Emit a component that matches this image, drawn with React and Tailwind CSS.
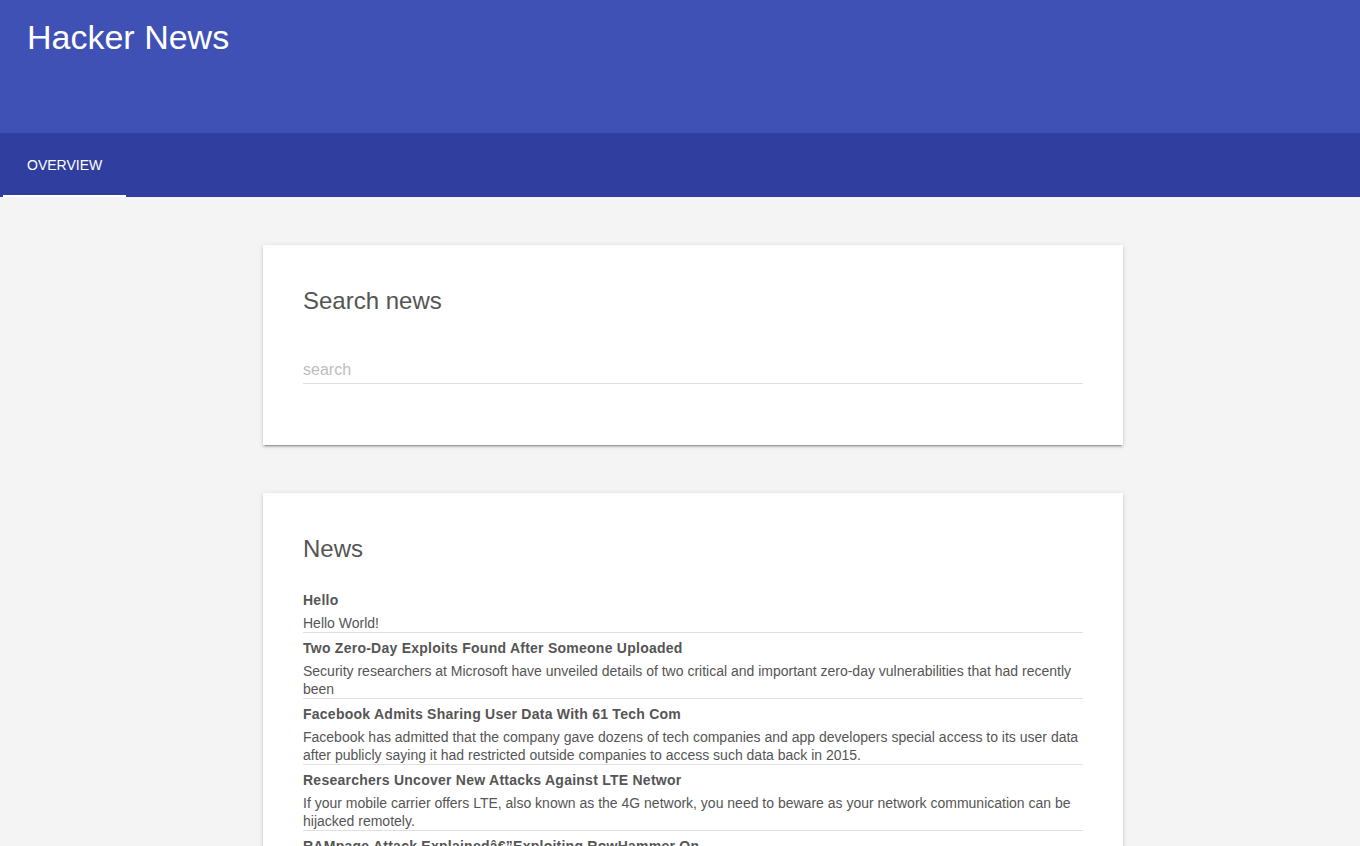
import { useState } from "react";

const news = [
  { title: "Hello", body: "Hello World!" },
  {
    title: "Two Zero-Day Exploits Found After Someone Uploaded",
    body: "Security researchers at Microsoft have unveiled details of two critical and important zero-day vulnerabilities that had recently been",
  },
  {
    title: "Facebook Admits Sharing User Data With 61 Tech Com",
    body: "Facebook has admitted that the company gave dozens of tech companies and app developers special access to its user data after publicly saying it had restricted outside companies to access such data back in 2015.",
  },
  {
    title: "Researchers Uncover New Attacks Against LTE Networ",
    body: "If your mobile carrier offers LTE, also known as the 4G network, you need to beware as your network communication can be hijacked remotely.",
  },
  {
    title: "RAMpage Attack Explainedâ€\u201dExploiting RowHammer On",
    body: "Security researchers have disclosed a new attack technique that lets malicious apps gain root access on Android devices.",
  },
];

const cardShadow =
  "shadow-[0_2px_2px_0_rgba(0,0,0,0.14),0_3px_1px_-2px_rgba(0,0,0,0.2),0_1px_5px_0_rgba(0,0,0,0.12)]";

export default function App() {
  const [query, setQuery] = useState("");

  return (
    <div className="min-h-screen bg-[#f4f4f4] font-['Liberation_Sans',Arial,sans-serif]">
      {/* Header */}
      <header className="bg-[#3f51b5] text-white">
        <div className="h-[133px] pl-[27px] pt-[15px]">
          <h1 className="text-[34px] leading-[44px] font-normal">Hacker News</h1>
        </div>
        <nav className="flex h-16 bg-[#303f9f] pl-[3px]">
          <a className="relative flex items-center px-6 text-sm uppercase text-white">
            Overview
            <span className="absolute bottom-0 left-0 right-0 h-[2px] bg-white" />
          </a>
        </nav>
      </header>

      <main className="ml-[263px] flex w-[860px] flex-col gap-12 py-12">
        {/* Search card */}
        <section className={`bg-white px-10 pt-10 pb-[61px] ${cardShadow}`}>
          <h2 className="text-2xl leading-8 text-[#555]">Search news</h2>
          <input
            value={query}
            onChange={(e) => setQuery(e.target.value)}
            placeholder="search"
            className="mt-[43px] w-full border-b border-[#e0e0e0] pb-[3px] text-base leading-5 text-[#555] placeholder-[#bdbdbd] outline-none"
          />
        </section>

        {/* News card */}
        <section className={`bg-white px-10 pt-10 pb-10 ${cardShadow}`}>
          <h2 className="text-2xl leading-8 text-[#555]">News</h2>
          <ul className="mt-5">
            {news.map((n) => (
              <li key={n.title} className="border-b border-[#e0e0e0] pt-[3px]">
                <h3 className="text-sm leading-6 font-bold tracking-[0.25px] text-[#555]">{n.title}</h3>
                <p className="mt-[2px] text-sm leading-[18px] text-[#555]">{n.body}</p>
              </li>
            ))}
          </ul>
        </section>
      </main>
    </div>
  );
}
